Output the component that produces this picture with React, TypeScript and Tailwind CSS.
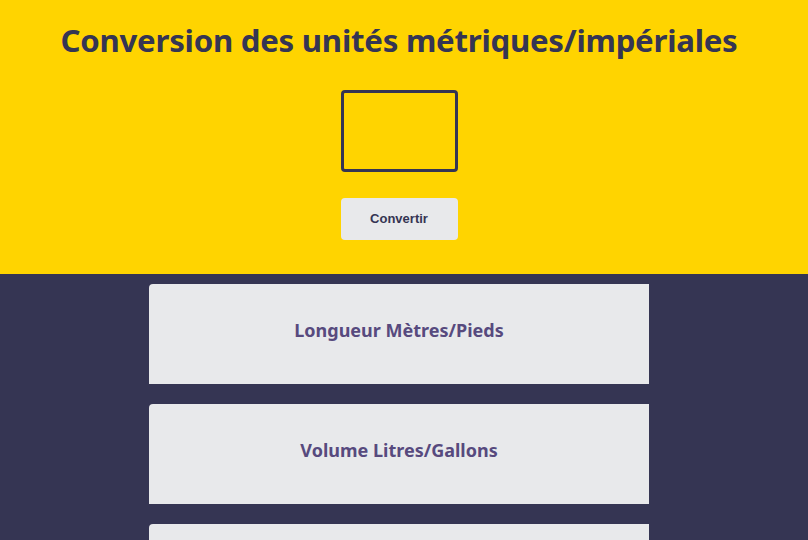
export default function App() {
  const cards = ["Longueur Mètres/Pieds", "Volume Litres/Gallons", "Masse Kilogrammes/Livres"];
  return (
    <div className="min-h-[540px] bg-[#353553]" style={{ fontFamily: '"Noto Sans", sans-serif' }}>
      <div className="bg-[#ffd400] h-[274px] flex flex-col items-center pt-[20px] pr-[10px]">
        <h1 className="text-[31.2px] font-bold text-[#353553] leading-[40px] tracking-[-0.25px]">
          Conversion des unités métriques/impériales
        </h1>
        <input className="mt-[30px] w-[117px] h-[82px] border-[3px] border-[#353553] rounded-[4px] bg-transparent outline-none" />
        <button
          className="mt-[26px] w-[117px] h-[42px] bg-[#e8e9eb] rounded-[4px] text-[13px] font-bold text-[#353553]"
          style={{ fontFamily: '"Liberation Sans", Arial, sans-serif' }}
        >
          Convertir
        </button>
      </div>
      <div className="flex flex-col items-center gap-[20px] pt-[10px] pb-[20px] pr-[10px]">
        {cards.map((c) => (
          <div
            key={c}
            className="w-[500px] h-[100px] bg-[#e8e9eb] rounded-tl-[4px] flex items-center justify-center pb-[8px] text-[18px] font-bold text-[#574a7e]"
          >
            {c}
          </div>
        ))}
      </div>
    </div>
  );
}
